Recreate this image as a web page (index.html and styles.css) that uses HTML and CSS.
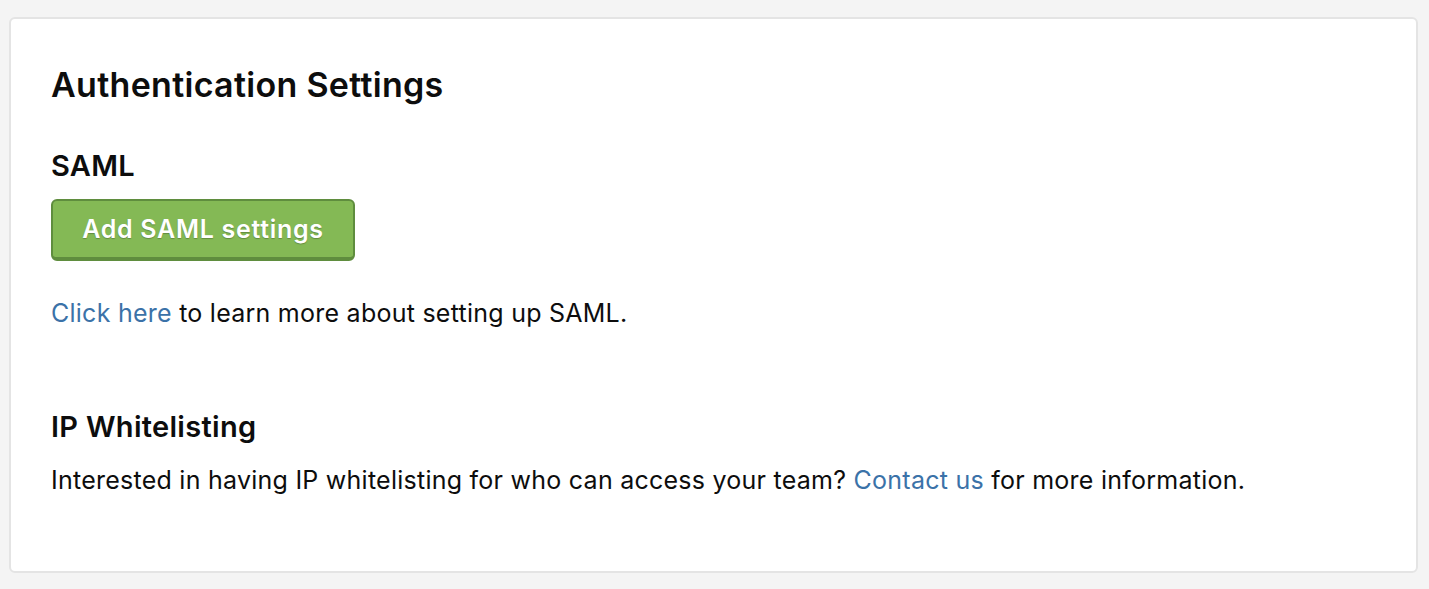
FILE: index.html
```html
<!DOCTYPE html>
<html>
<head>
<meta charset="utf-8">
<link rel="stylesheet" href="styles.css">
</head>
<body>
<div class="card">
  <h1 class="title">Authentication Settings</h1>
  <section class="section">
    <h2 class="subtitle">SAML</h2>
    <button class="btn">Add SAML settings</button>
    <p class="text"><a class="link" href="#">Click here</a> to learn more about setting up SAML.</p>
  </section>
  <section class="section ip">
    <h2 class="subtitle">IP Whitelisting</h2>
    <p class="text">Interested in having IP whitelisting for who can access your team? <a class="link" href="#">Contact us</a> for more information.</p>
  </section>
</div>
</body>
</html>
```
FILE: styles.css
```css
html, body {
  margin: 0;
  padding: 0;
  background: #f4f4f4;
  font-family: Inter, "Noto Sans", sans-serif;
  color: #0d0d0d;
}
body {
  padding: 17px 11px 16px 9px;
}
.card {
  background: #fff;
  border: 2px solid #e4e4e4;
  border-radius: 6px;
  padding: 46px 40px 50px 40px;
  box-sizing: border-box;
  height: 556px;
}
.title {
  margin: 0 0 44px 0;
  font-size: 34px;
  font-weight: 600;
  line-height: 40px;
  letter-spacing: 0.3px;
}
.subtitle {
  margin: 0 0 16px 0;
  font-size: 29px;
  font-weight: 600;
  line-height: 34px;
  letter-spacing: 0.3px;
}
.btn {
  display: block;
  font-family: inherit;
  font-size: 25px;
  font-weight: 600;
  letter-spacing: 0.7px;
  color: #fff;
  text-shadow: 0 1px 1px rgba(0,0,0,0.25);
  background: #84b955;
  border: 2px solid #5f8d3e;
  border-bottom-width: 4px;
  border-radius: 6px;
  width: 304px;
  height: 62px;
  padding: 0;
  margin-bottom: 35px;
}
.text {
  margin: 0;
  font-size: 25px;
  line-height: 34px;
  letter-spacing: 0.25px;
}
.link {
  color: #3b72a8;
  text-decoration: none;
}
.ip {
  margin-top: 80px;
}
.ip .subtitle {
  margin-bottom: 19px;
}
```
